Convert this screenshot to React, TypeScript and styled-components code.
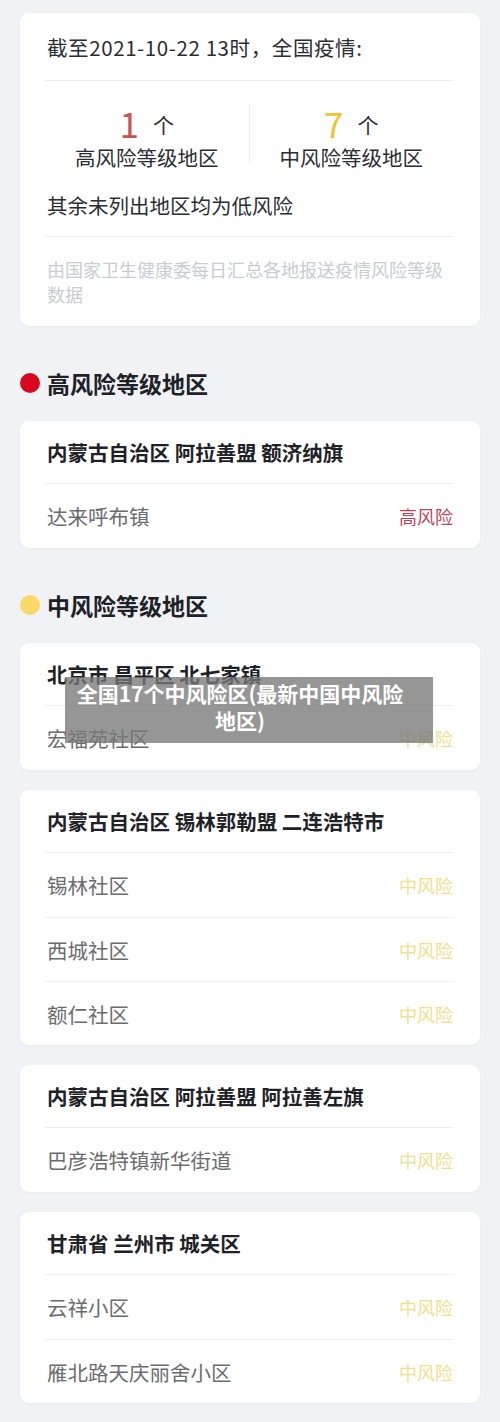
import React from 'react';
import styled, { createGlobalStyle } from 'styled-components';

const GlobalStyle = createGlobalStyle`
  html, body {
    margin: 0;
    padding: 0;
    background: #f0f2f6;
  }
  body {
    font-family: "Noto Sans CJK SC", "Noto Sans", sans-serif;
    -webkit-font-smoothing: antialiased;
  }
`;

const Page = styled.div`
  position: relative;
  width: 500px;
  padding: 13px 20px 19px;
  box-sizing: border-box;
  background: #f0f2f6;
`;

const Card = styled.div`
  background: #ffffff;
  border-radius: 9px;
  padding: 0 27px 0 25px;
  box-shadow: 0 1px 3px rgba(40, 50, 70, 0.04);

  & + & {
    margin-top: 20px;
  }
`;

const SummaryHead = styled.div`
  height: 67px;
  display: flex;
  align-items: center;
  font-size: 20.5px;
  letter-spacing: 0.6px;
  color: #2a2d33;
  padding-left: 2px;
  border-bottom: 1px solid #eceef1;
`;

const Stats = styled.div`
  display: grid;
  grid-template-columns: 1fr 1px 1fr;
  margin-top: 22px;
`;

const StatCol = styled.div`
  display: flex;
  flex-direction: column;
  align-items: center;
`;

const StatNumRow = styled.div`
  height: 38px;
  display: flex;
  align-items: center;
  justify-content: center;
`;

const StatNum = styled.span<{ $color: string }>`
  font-size: 35px;
  font-weight: 400;
  color: ${p => p.$color};
  line-height: 1;
`;

const StatUnit = styled.span`
  font-size: 21px;
  line-height: 1;
  color: #2a2d33;
  margin-left: 14px;
  margin-top: 4px;
`;

const StatLabel = styled.div`
  line-height: 32px;
  font-size: 20.5px;
  color: #2a2d33;
`;

const VDivider = styled.div`
  width: 1px;
  height: 60px;
  background: #eceef1;
`;

const Note = styled.div`
  padding: 17px 0 16px 2px;
  line-height: 30px;
  font-size: 20.5px;
  color: #2a2d33;
  border-bottom: 1px solid #eceef1;
`;

const Source = styled.div`
  padding: 20px 0 19px 2px;
  line-height: 25px;
  font-size: 18px;
  color: #c9ccd2;
`;

const SectionHead = styled.div`
  display: flex;
  align-items: center;
  padding: 44px 0 25px;
  height: 26px;
  box-sizing: content-box;
`;

const Dot = styled.span<{ $color: string }>`
  width: 20px;
  height: 20px;
  border-radius: 50%;
  background: ${p => p.$color};
  margin-right: 7px;
  flex-shrink: 0;
`;

const SectionTitle = styled.h2`
  margin: 0;
  font-size: 23px;
  font-weight: 700;
  color: #1e2227;
  line-height: 26px;
`;

const AreaTitle = styled.div`
  height: 62px;
  display: flex;
  align-items: center;
  padding-left: 2px;
  font-size: 20.5px;
  font-weight: 700;
  color: #1e2227;
  border-bottom: 1px solid #eceef1;
`;

const Row = styled.div`
  height: 64px;
  display: flex;
  align-items: center;
  justify-content: space-between;
  padding-left: 2px;

  & + & {
    border-top: 1px solid #eceef1;
    height: 63px;
  }
`;

const RowName = styled.span`
  font-size: 20.5px;
  color: #6a6c70;
`;

const RowLevel = styled.span<{ $color: string }>`
  font-size: 18px;
  color: ${p => p.$color};
`;

// caption strip laid over the list, as in the source picture
const Caption = styled.div`
  position: absolute;
  top: 677px;
  left: 65px;
  width: 368px;
  height: 66px;
  box-sizing: border-box;
  padding: 0 22px 6px 4px;
  background: rgba(120, 120, 120, 0.78);
  color: #ffffff;
  font-size: 21px;
  font-weight: 700;
  line-height: 27px;
  text-align: center;
  display: flex;
  align-items: center;
  justify-content: center;
`;

type Area = { title: string; rows: string[] };

const HIGH: Area[] = [
  { title: '内蒙古自治区 阿拉善盟 额济纳旗', rows: ['达来呼布镇'] },
];

const MID: Area[] = [
  { title: '北京市 昌平区 北七家镇', rows: ['宏福苑社区'] },
  { title: '内蒙古自治区 锡林郭勒盟 二连浩特市', rows: ['锡林社区', '西城社区', '额仁社区'] },
  { title: '内蒙古自治区 阿拉善盟 阿拉善左旗', rows: ['巴彦浩特镇新华街道'] },
  { title: '甘肃省 兰州市 城关区', rows: ['云祥小区', '雁北路天庆丽舍小区'] },
];

const AreaCard: React.FC<{ area: Area; level: string; color: string }> = ({ area, level, color }) => (
  <Card>
    <AreaTitle>{area.title}</AreaTitle>
    {area.rows.map(r => (
      <Row key={r}>
        <RowName>{r}</RowName>
        <RowLevel $color={color}>{level}</RowLevel>
      </Row>
    ))}
  </Card>
);

const App: React.FC = () => {
  return (
    <Page>
      <GlobalStyle />
      <Card>
        <SummaryHead>截至2021-10-22 13时，全国疫情:</SummaryHead>
        <Stats>
          <StatCol>
            <StatNumRow>
              <StatNum $color="#c9564f">1</StatNum>
              <StatUnit>个</StatUnit>
            </StatNumRow>
            <StatLabel>高风险等级地区</StatLabel>
          </StatCol>
          <VDivider />
          <StatCol>
            <StatNumRow>
              <StatNum $color="#f2c232">7</StatNum>
              <StatUnit>个</StatUnit>
            </StatNumRow>
            <StatLabel>中风险等级地区</StatLabel>
          </StatCol>
        </Stats>
        <Note>其余未列出地区均为低风险</Note>
        <Source>由国家卫生健康委每日汇总各地报送疫情风险等级数据</Source>
      </Card>

      <SectionHead>
        <Dot $color="#d60a1c" />
        <SectionTitle>高风险等级地区</SectionTitle>
      </SectionHead>
      {HIGH.map(a => (
        <AreaCard key={a.title} area={a} level="高风险" color="#b8465b" />
      ))}

      <SectionHead>
        <Dot $color="#fbd968" />
        <SectionTitle>中风险等级地区</SectionTitle>
      </SectionHead>
      {MID.map(a => (
        <AreaCard key={a.title} area={a} level="中风险" color="#efe08e" />
      ))}

      <Caption>全国17个中风险区(最新中国中风险地区)</Caption>
    </Page>
  );
};

export default App;
